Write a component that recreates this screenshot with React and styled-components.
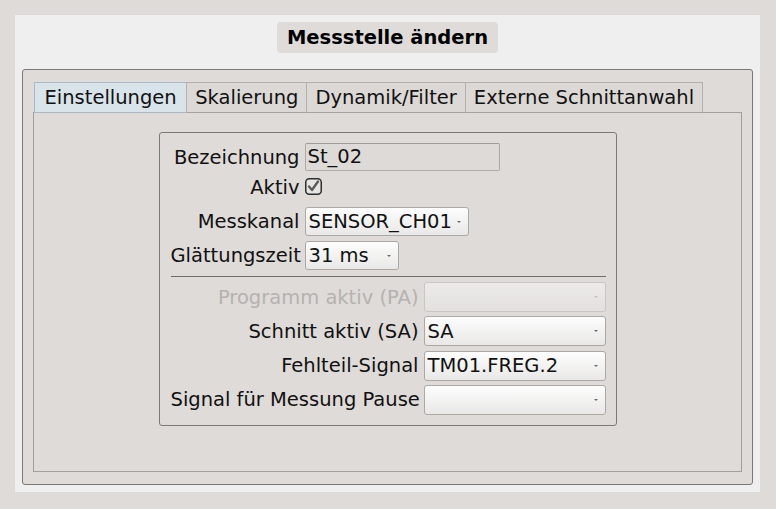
import React from 'react';
import styled, { createGlobalStyle } from 'styled-components';

const GlobalStyle = createGlobalStyle`
  html, body {
    margin: 0;
    padding: 0;
    background: #dfdbd8;
  }
  body {
    font-family: "DejaVu Sans", "Liberation Sans", sans-serif;
    font-size: 19.5px;
    color: #111;
  }
`;

const Screen = styled.div`
  width: 776px;
  height: 509px;
  padding: 15px 0 0 15px;
  box-sizing: border-box;
`;

const Panel = styled.div`
  width: 745px;
  height: 477px;
  background: #efefef;
  padding: 7px 7px 0 7px;
  box-sizing: border-box;
  display: flex;
  flex-direction: column;
  align-items: center;
`;

const Title = styled.div`
  height: 31px;
  line-height: 31px;
  padding: 0 10px;
  background: #dfdbd8;
  border-radius: 4px;
  font-weight: bold;
  color: #000;
`;

const Frame = styled.div`
  margin-top: 16px;
  width: 731px;
  height: 416px;
  box-sizing: border-box;
  border: 1px solid #7b7877;
  border-radius: 3px;
  background: #dfdbd8;
  padding: 12px 10px 12px 10px;
  display: flex;
  flex-direction: column;
`;

const TabBar = styled.div`
  display: flex;
  padding-left: 1px;
  height: 31px;
  margin-bottom: -1px;
  position: relative;
  z-index: 1;
`;

const Tab = styled.div`
  height: 31px;
  box-sizing: border-box;
  padding: 0 ${p => (p.active ? '9.5px' : '8px')};
  line-height: 29px;
  border: 1px solid ${p => (p.active ? '#a9bac6' : '#b4b0ad')};
  border-bottom-color: ${p => (p.active ? '#a9bac6' : '#a4a19e')};
  margin-left: ${p => (p.first ? '0' : '-1px')};
  background: ${p => (p.active ? '#d9e3ea' : '#dcd8d5')};
  color: #111;
  white-space: nowrap;
`;

const Pane = styled.div`
  flex: 1;
  border: 1px solid #a29f9c;
  display: flex;
  flex-direction: column;
  align-items: center;
  padding-top: 19px;
`;

const GroupBox = styled.div`
  width: 458px;
  box-sizing: border-box;
  border: 1px solid #7b7877;
  border-radius: 3px;
  padding: 10px 10px 10px 11px;
`;

const Form = styled.div`
  display: grid;
  grid-template-columns: ${p => p.columns};
  justify-content: start;
  column-gap: 5px;
  row-gap: ${p => p.gap || 5}px;
`;

const Label = styled.div`
  text-align: right;
  white-space: nowrap;
  align-self: ${p => (p.top ? 'start' : 'center')};
  color: ${p => (p.disabled ? '#b5b2af' : '#111')};
  direction: rtl;
  unicode-bidi: plaintext;
`;

const Field = styled.div`
  height: ${p => p.h}px;
  display: flex;
  align-items: ${p => (p.top ? 'flex-start' : 'center')};
`;

const TextInput = styled.div`
  width: ${p => p.w}px;
  height: 28px;
  box-sizing: border-box;
  border: 1px solid #aeaaa6;
  border-top-color: #9f9b97;
  border-radius: 2px;
  background: #dddad7;
  padding-left: 2px;
  line-height: 26px;
`;

const Combo = styled.div`
  width: ${p => (p.w ? `${p.w}px` : '100%')};
  height: 100%;
  box-sizing: border-box;
  border: 1px solid ${p => (p.disabled ? '#c9c6c3' : '#aca9a5')};
  border-radius: 3px;
  background: ${p =>
    p.disabled
      ? 'linear-gradient(#ecebe9, #e3e0de)'
      : 'linear-gradient(#fdfdfd, #e9e8e7)'};
  display: flex;
  align-items: center;
  padding: 0 6px 0 3px;
  color: #111;
`;

const ComboText = styled.span`
  flex: 1;
  white-space: nowrap;
  line-height: 27px;
`;

const Arrow = ({ light }) => (
  <svg width="6" height="4" viewBox="0 0 6 4">
    <path d="M1 1 L5 1 L3 3 Z" fill={light ? '#c4c1be' : '#6a6a6a'} />
  </svg>
);

const Check = () => (
  <svg width="17" height="17" viewBox="0 0 17 17" style={{ marginTop: 2 }}>
    <rect x="0.75" y="0.75" width="15.5" height="15.5" rx="3.5" fill="#e7e5e3" stroke="#2e2e2e" strokeWidth="1.5" />
    <path d="M4 8.5 L7 12 L13 3.5" fill="none" stroke="#5b5b5b" strokeWidth="2.4" strokeLinecap="round" strokeLinejoin="round" />
  </svg>
);

const Separator = styled.div`
  height: 1px;
  background: #6f6c6a;
  margin: 6px 0 5px 0;
`;

const Select = ({ value, w, disabled }) => (
  <Combo w={w} disabled={disabled}>
    <ComboText>{value}</ComboText>
    <Arrow light={disabled} />
  </Combo>
);

const tabs = ['Einstellungen', 'Skalierung', 'Dynamik/Filter', 'Externe Schnittanwahl'];

const signals = [
  { label: 'Programm aktiv (PA)', value: '', disabled: true },
  { label: 'Schnitt aktiv (SA)', value: 'SA' },
  { label: 'Fehlteil-Signal', value: 'TM01.FREG.2' },
  { label: 'Signal für Messung Pause', value: '' },
];

export default function App() {
  return (
    <Screen>
      <GlobalStyle />
      <Panel>
        <Title>Messstelle ändern</Title>
        <Frame>
          <TabBar>
            {tabs.map((t, i) => (
              <Tab key={t} active={i === 0} first={i === 0}>{t}</Tab>
            ))}
          </TabBar>
          <Pane>
            <GroupBox>
              <Form columns="129px auto">
                <Label>Bezeichnung</Label>
                <Field h={28}><TextInput w={195}>St_02</TextInput></Field>

                <Label top>Aktiv</Label>
                <Field h={26} top><Check /></Field>

                <Label>Messkanal</Label>
                <Field h={29}><Select value="SENSOR_CH01" w={164} /></Field>

                <Label>Glättungszeit</Label>
                <Field h={29}><Select value="31 ms" w={94} /></Field>
              </Form>
              <Separator />
              <Form columns="minmax(0, 1fr) 182px" gap={4.33}>
                {signals.map(s => (
                  <React.Fragment key={s.label}>
                    <Label disabled={s.disabled}>{s.label}</Label>
                    <Field h={30}><Select value={s.value} disabled={s.disabled} /></Field>
                  </React.Fragment>
                ))}
              </Form>
            </GroupBox>
          </Pane>
        </Frame>
      </Panel>
    </Screen>
  );
}
